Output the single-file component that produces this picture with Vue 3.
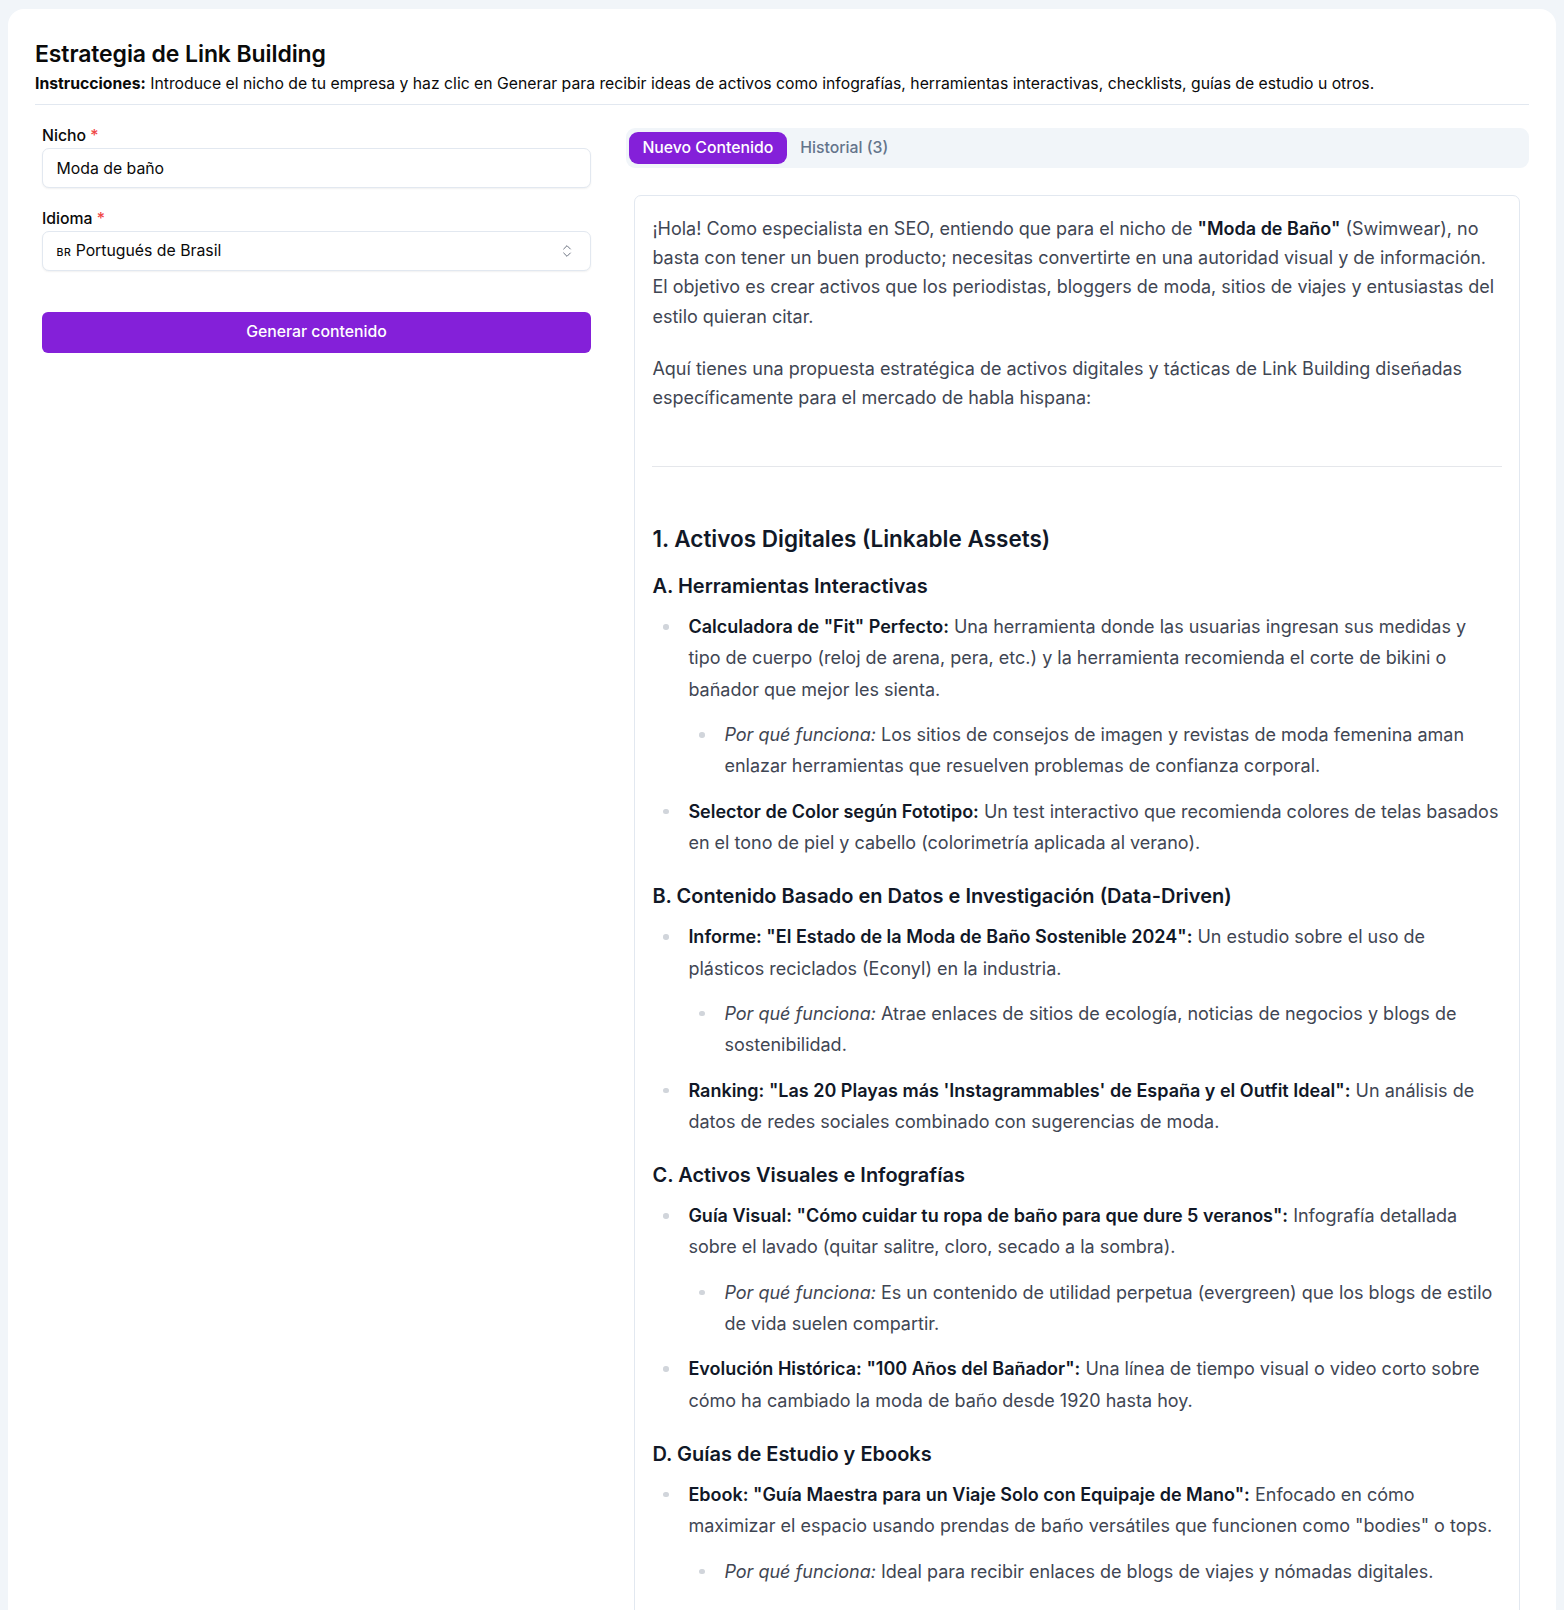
<script setup>
const sections = [
  { title: 'A. Herramientas Interactivas', items: [
    { b: 'Calculadora de "Fit" Perfecto:', t: ' Una herramienta donde las usuarias ingresan sus medidas y tipo de cuerpo (reloj de arena, pera, etc.) y la herramienta recomienda el corte de bikini o bañador que mejor les sienta.', why: ' Los sitios de consejos de imagen y revistas de moda femenina aman enlazar herramientas que resuelven problemas de confianza corporal.' },
    { b: 'Selector de Color según Fototipo:', t: ' Un test interactivo que recomienda colores de telas basados en el tono de piel y cabello (colorimetría aplicada al verano).' }
  ] },
  { title: 'B. Contenido Basado en Datos e Investigación (Data-Driven)', items: [
    { b: 'Informe: "El Estado de la Moda de Baño Sostenible 2024":', t: ' Un estudio sobre el uso de plásticos reciclados (Econyl) en la industria.', why: ' Atrae enlaces de sitios de ecología, noticias de negocios y blogs de sostenibilidad.' },
    { b: "Ranking: \"Las 20 Playas más 'Instagrammables' de España y el Outfit Ideal\":", t: ' Un análisis de datos de redes sociales combinado con sugerencias de moda.' }
  ] },
  { title: 'C. Activos Visuales e Infografías', items: [
    { b: 'Guía Visual: "Cómo cuidar tu ropa de baño para que dure 5 veranos":', t: ' Infografía detallada sobre el lavado (quitar salitre, cloro, secado a la sombra).', why: ' Es un contenido de utilidad perpetua (evergreen) que los blogs de estilo de vida suelen compartir.' },
    { b: 'Evolución Histórica: "100 Años del Bañador":', t: ' Una línea de tiempo visual o video corto sobre cómo ha cambiado la moda de baño desde 1920 hasta hoy.' }
  ] },
  { title: 'D. Guías de Estudio y Ebooks', items: [
    { b: 'Ebook: "Guía Maestra para un Viaje Solo con Equipaje de Mano":', t: ' Enfocado en cómo maximizar el espacio usando prendas de baño versátiles que funcionen como "bodies" o tops.', why: ' Ideal para recibir enlaces de blogs de viajes y nómadas digitales.' }
  ] }
]
</script>

<template>
  <div class="page">
    <main class="card">
      <header class="head">
        <h1>Estrategia de Link Building</h1>
        <p><strong>Instrucciones:</strong> Introduce el nicho de tu empresa y haz clic en Generar para recibir ideas de activos como infografías, herramientas interactivas, checklists, guías de estudio u otros.</p>
      </header>
      <div class="columns">
        <aside class="form">
          <label class="label">Nicho <span class="req">*</span></label>
          <div class="field">Moda de baño</div>
          <label class="label second">Idioma <span class="req">*</span></label>
          <div class="field select">
            <span><span class="flag">BR</span> Portugués de Brasil</span>
            <svg class="updown" viewBox="0 0 24 24" fill="none" stroke="#6b7280" stroke-width="1.5" stroke-linecap="round" stroke-linejoin="round"><path d="m7 15 5 5 5-5" /><path d="m7 9 5-5 5 5" /></svg>
          </div>
          <button class="generate">Generar contenido</button>
        </aside>
        <section class="result">
          <div class="tabs">
            <span class="tab active">Nuevo Contenido</span>
            <span class="tab">Historial (3)</span>
          </div>
          <article class="output">
            <p>¡Hola! Como especialista en SEO, entiendo que para el nicho de <strong>"Moda de Baño"</strong> (Swimwear), no basta con tener un buen producto; necesitas convertirte en una autoridad visual y de información. El objetivo es crear activos que los periodistas, bloggers de moda, sitios de viajes y entusiastas del estilo quieran citar.</p>
            <p>Aquí tienes una propuesta estratégica de activos digitales y tácticas de Link Building diseñadas específicamente para el mercado de habla hispana:</p>
            <hr />
            <h2>1. Activos Digitales (Linkable Assets)</h2>
            <template v-for="s in sections" :key="s.title">
              <h3>{{ s.title }}</h3>
              <ul>
                <li v-for="item in s.items" :key="item.b">
                  <strong>{{ item.b }}</strong>{{ item.t }}
                  <ul v-if="item.why">
                    <li><em>Por qué funciona:</em>{{ item.why }}</li>
                  </ul>
                </li>
              </ul>
            </template>
          </article>
        </section>
      </div>
    </main>
  </div>
</template>

<style>
html, body { margin: 0; background: #f1f5f9; overflow: hidden; }
</style>

<style scoped>
.page { height: 1610px; overflow: hidden; padding: 9px 8px 0; box-sizing: border-box; font-family: Inter, "Noto Sans", sans-serif; color: #0a0a0a; }
.card { background: #fff; border-radius: 16px 16px 0 0; padding: 31px 27.5px 0 27px; height: 1800px; box-sizing: border-box; }
.head { border-bottom: 1px solid #e2e8f0; padding-bottom: 9px; }
h1 { margin: 0; font-size: 23px; line-height: 28px; font-weight: 600; letter-spacing: -0.1px; }
.head p { margin: 5px 0 0; font-size: 15.75px; line-height: 22px; }
.head strong { font-weight: 700; }
.columns { display: flex; gap: 35.4px; margin-top: 21px; }
.form { width: 549px; margin-left: 7px; flex: none; display: flex; flex-direction: column; }
.label { font-size: 15.8px; line-height: 20px; font-weight: 500; }
.second { margin-top: 21.4px; }
.req { color: #ef4444; }
.field { margin-top: 2px; height: 39.6px; box-sizing: border-box; border: 1px solid #e2e8f0; border-radius: 7px; box-shadow: 0 1px 2px rgba(0,0,0,.06); padding: 1px 13.5px 0; display: flex; align-items: center; font-size: 15.8px; background: #fff; }
.select { justify-content: space-between; padding: 0 15px 1px 13.5px; height: 40.6px; margin-top: 1.8px; }
.flag { font-size: 10.5px; font-weight: 500; letter-spacing: .5px; }
.updown { width: 16px; height: 16px; }
.generate { margin-top: 40.4px; height: 41px; border: 0; border-radius: 6px; background: #8420d9; color: #fff; font: 500 15.8px Inter, sans-serif; padding-bottom: 2px; }
.result { flex: 1; min-width: 0; margin-top: 2px; }
.tabs { height: 40px; background: #f1f5f9; border-radius: 9px; padding: 4px 3px; box-sizing: border-box; display: flex; }
.tab { display: flex; align-items: center; padding: 0 13px 1px; font-size: 15.8px; font-weight: 500; color: #64748b; border-radius: 9px; }
.tab.active { background: #8420d9; color: #fff; padding-right: 14px; }
.output { margin: 27px 9px 0 8px; border: 1px solid #e2e8f0; border-radius: 7px; padding: 17.6px 16.5px 60px 17px; font-size: 18px; line-height: 29.4px; color: #3f4653; }
.output p { margin: 0 0 22.6px; }
.output strong { font-weight: 600; color: #111827; }
hr { border: 0; border-top: 1px solid #e5e7eb; margin: 53px 0 56px; }
h2 { margin: 0 0 16px; font-size: 22.5px; line-height: 32px; font-weight: 600; color: #111827; }
h3 { margin: 0 0 10.4px; font-size: 20px; line-height: 30px; font-weight: 600; color: #111827; }
ul { margin: 0 0 22.4px; padding-left: 36px; list-style: none; }
ul ul { margin: 14px 0 0; }
li { line-height: 31.35px; margin-bottom: 14px; position: relative; }
li::before { content: ""; position: absolute; left: -25px; top: 13px; width: 5.5px; height: 5.5px; border-radius: 50%; background: #d1d5db; }
</style>
